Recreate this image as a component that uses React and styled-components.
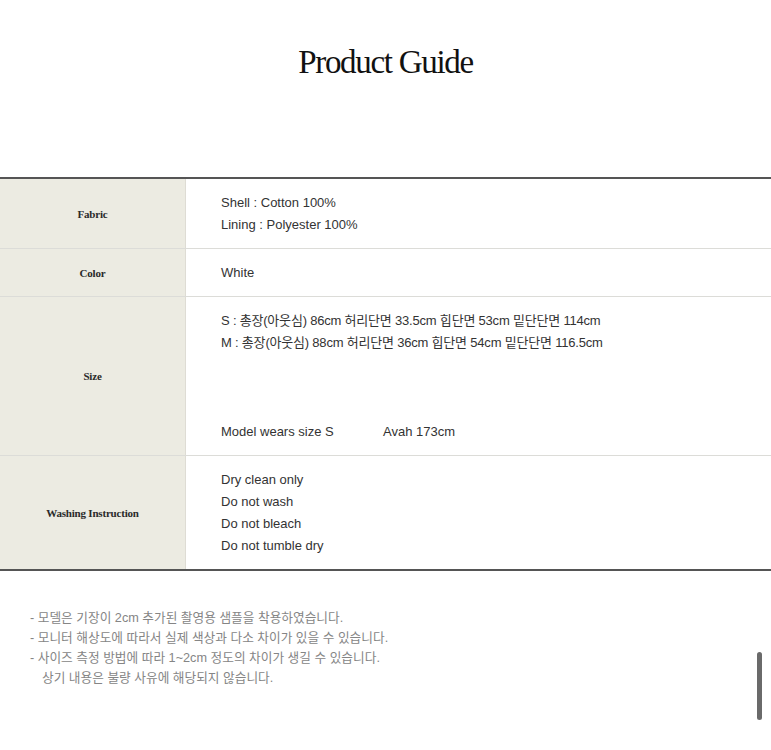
import React from 'react';
import styled, { createGlobalStyle } from 'styled-components';

const GlobalStyle = createGlobalStyle`
  html, body {
    margin: 0;
    padding: 0;
    background: #fff;
  }
  body {
    font-family: 'Liberation Sans', 'Noto Sans CJK KR', sans-serif;
    color: #333;
  }
`;

const rows = [
  {
    label: 'Fabric',
    lines: ['Shell : Cotton 100%', 'Lining : Polyester 100%'],
  },
  { label: 'Color', lines: ['White'] },
  {
    label: 'Size',
    lines: [
      'S : 총장(아웃심) 86cm 허리단면 33.5cm 힙단면 53cm 밑단단면 114cm',
      'M : 총장(아웃심) 88cm 허리단면 36cm 힙단면 54cm 밑단단면 116.5cm',
    ],
    tight: true,
    model: { size: 'Model wears size S', name: 'Avah 173cm' },
  },
  {
    label: 'Washing Instruction',
    lines: ['Dry clean only', 'Do not wash', 'Do not bleach', 'Do not tumble dry'],
  },
];

const notes = [
  '- 모델은 기장이 2cm 추가된 촬영용 샘플을 착용하였습니다.',
  '- 모니터 해상도에 따라서 실제 색상과 다소 차이가 있을 수 있습니다.',
  '- 사이즈 측정 방법에 따라 1~2cm 정도의 차이가 생길 수 있습니다.',
];

const App = () => (
  <Page>
    <GlobalStyle />
    <Header>
      <Title>Product Guide</Title>
    </Header>
    <Table>
      {rows.map(row => (
        <Row key={row.label}>
          <Label>{row.label}</Label>
          <Content>
            {row.lines.map(line => (
              <Line key={line} tight={row.tight}>
                {line}
              </Line>
            ))}
            {row.model && (
              <ModelLine>
                <ModelSize>{row.model.size}</ModelSize>
                {row.model.name}
              </ModelLine>
            )}
          </Content>
        </Row>
      ))}
    </Table>
    <Notes>
      {notes.map(note => (
        <Note key={note}>{note}</Note>
      ))}
      <Note indent>상기 내용은 불량 사유에 해당되지 않습니다.</Note>
    </Notes>
    <ScrollThumb />
  </Page>
);

const Page = styled.div`
  position: relative;
  width: 771px;
  height: 750px;
  overflow: hidden;
  background: #fff;
`;

const Header = styled.header`
  height: 177px;
  display: flex;
  justify-content: center;
  padding-top: 40px;
  box-sizing: border-box;
`;

const Title = styled.h1`
  margin: 0;
  font-family: 'Liberation Serif', serif;
  font-weight: normal;
  font-size: 33px;
  letter-spacing: -1.3px;
  line-height: 44px;
  color: #111;
`;

const Table = styled.div`
  border-top: 2px solid #555;
  border-bottom: 2px solid #555;
`;

const Row = styled.div`
  display: grid;
  grid-template-columns: 186px 1fr;
  & + & {
    border-top: 1px solid #dcdcd8;
  }
`;

const Label = styled.div`
  background: #ecebe2;
  border-right: 1px solid #dedcd4;
  display: flex;
  align-items: center;
  justify-content: center;
  font-family: 'Liberation Serif', serif;
  font-weight: bold;
  font-size: 11px;
  letter-spacing: -0.2px;
  color: #2a2a2a;
`;

const Content = styled.div`
  padding: 12.5px 0 12.5px 35px;
  font-size: 13px;
  line-height: 22px;
  color: #333;
`;

const Line = styled.div`
  letter-spacing: ${({ tight }) => (tight ? '-0.2px' : 'normal')};
`;

const ModelLine = styled.div`
  margin-top: 67px;
`;

const ModelSize = styled.span`
  display: inline-block;
  width: 162px;
`;

const Notes = styled.div`
  padding: 37px 0 0 30px;
`;

const Note = styled.div`
  font-size: 12.7px;
  line-height: 20px;
  color: #858585;
  padding-left: ${({ indent }) => (indent ? '12px' : '0')};
`;

const ScrollThumb = styled.div`
  position: absolute;
  left: 757px;
  top: 652px;
  width: 5px;
  height: 68px;
  border-radius: 3px;
  background: #6a6a6a;
`;

export default App;
